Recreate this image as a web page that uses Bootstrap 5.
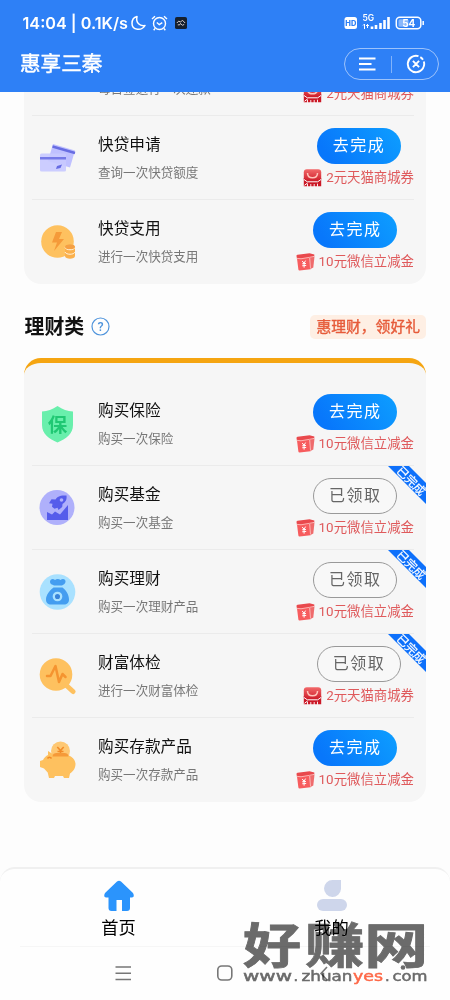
<!DOCTYPE html>
<html lang="zh-CN">
<head>
<meta charset="utf-8">
<meta name="viewport" content="width=device-width, initial-scale=1">
<title>惠享三秦</title>
<link href="https://cdn.jsdelivr.net/npm/bootstrap@5.3.0/dist/css/bootstrap.min.css" rel="stylesheet">
<style>
body{font-family:Roboto,"Noto Sans CJK SC",sans-serif;color:#111;background:#fdfdfd;height:1000px;overflow:hidden}
svg{display:block;flex:none}
.app-head{background:#2e80f6;height:92px;flex:none}
.status-line{height:46px;padding:0 24px 0 22.5px;font:600 16.2px/46px Inter,sans-serif}
.title-line{height:36px;padding:0 11.5px 0 20px;font-size:20.6px;line-height:36px}
.title-line>span{-webkit-text-stroke:.45px #fff}
.capsule{width:95px;height:32px;border:1px solid #9dc3fb;border-radius:16px}
.capsule i{width:1px;height:17px;background:#82b3fa}
.task-card{background:#f6f6f6;margin:0 24px;border-radius:0 0 17px 17px;overflow:hidden}
.card-a{height:192px}
.card-b{height:444px;border-radius:17px;border-top:5px solid #f5a511;padding-top:19px}
.task{height:84px;flex:none;position:relative;padding:0 12px 0 15px}
.task+.task::before{content:"";position:absolute;left:8px;right:12px;top:-1px;height:1px;background:#ebebeb}
.task-name{font-size:15.65px;line-height:24px;margin-top:17px}
.task-sub{font-size:12.55px;line-height:20px;margin-top:6px;color:#777}
.task-text{margin-left:22px}
.btn.act{width:84px;height:36px;margin-top:12px;padding:0 0 0 1px;border-radius:18px;font-size:16px;line-height:34px;letter-spacing:1.6px}
.btn.todo{color:#fff;border:0;background:linear-gradient(55deg,#0877fb 15%,#0d9cff 95%)}
.btn.got{color:#666;border:1px solid #999;background:#f8f8f8}
.reward{color:#df5a5c;font-size:13.4px;line-height:20px;margin-top:4px;gap:4px}
.corner-flag{position:absolute;right:0;top:0;width:38px;height:38px}
.section-head{height:74px;padding:11px 24px 0 24.5px}
.section-head h2{font-size:19.9px;font-weight:700;line-height:28px;padding-top:3px}
.promo{background:#feefe4;color:#e65b3a;-webkit-text-stroke:.4px #e65b3a;font-size:14.8px;line-height:24px;height:24px;padding:0 6px;border-radius:5px}
.tabs{position:absolute;left:0;right:0;top:867px;height:133px;border-top:2px solid #f0f0f0;border-radius:15px 15px 0 0;background:#fefefe}
.tabs a{color:#000;font-size:17.3px;line-height:24px;padding-top:11px}
.tabs a span{margin-top:4px}
.tab-row{height:77px;padding:0 12px}
.sys-row{height:52px;margin:0 20px;border-top:1px solid #f6f6f6}
.site-mark{position:absolute;left:240px;top:914px;mix-blend-mode:multiply}
</style>
</head>
<body class="position-relative d-flex flex-column">
<svg width="0" height="0" class="position-absolute">
<defs>
<linearGradient id="redbag" x2="0" y2="1"><stop stop-color="#f2696a"/><stop offset="1" stop-color="#cb1826"/></linearGradient>
<symbol id="tmall" viewBox="0 0 18 18"><rect x=".3" y=".3" width="17.400" height="12.500" rx="3" fill="url(#redbag)"/><path d="M.3 9l3.500 3h10.400l3.500-3v8.200H.3z" fill="#cb1826"/><path d="M4 4c0 3 2 4.800 5 4.800s5-1.800 5-4.800" fill="none" stroke="#ffc4ba" stroke-width="1.500"/><path d="M.5 10.500l3.300 2.300h10.400l3.300-2.300M1 16.300l3-2.300" fill="none" stroke="#fff" stroke-width="1"/><path d="M4 14.700v3M7.300 15v3M10.700 15v3M14 14.700v3" stroke="#fff" stroke-width=".9"/></symbol>
<symbol id="coupon" viewBox="0 0 19 18"><path d="M13 4.500l5.500-1-1.200 11-3.300 1.700z" fill="#ef6b6c"/><path d="M.5 3Q.4 2 1.500 1.800l12-1.500 4.800 1.200v2L13 5 1 6z" fill="#e9494d"/><path d="M1 5.500l12.500-1.300 1 12L3.700 17.500Q2.600 17.600 2.400 16.500z" fill="#f75c5e"/><path d="M.5 5.300l4.500.5 8.500-1.500 5-1M13.700 5l.8 10.500" fill="none" stroke="#ffd8d5" stroke-width=".7"/><path d="M6.200 8l1.800 2.200 1.600-2.600M6.200 10.800l3.800-.4M6.200 12.800l4-.4M8.100 10v4.600" fill="none" stroke="#fff" stroke-width="1"/></symbol>
<symbol id="flag" viewBox="0 0 38 38"><path d="M0 0h21l17 17v21z" fill="#0d70fb"/><text transform="translate(23.300 14.800) rotate(45)" text-anchor="middle" y="4.400" font-size="11.800" fill="#fff" stroke="#fff" stroke-width=".2">已完成</text></symbol>
</defs>
</svg>

<header class="app-head text-white">
<div class="status-line d-flex align-items-center">
<span>14:04 | 0.1K/s</span>
<svg style="margin-left:3px" width="15" height="16" viewBox="0 0 15 16" fill="none" stroke="#fff" stroke-width="1.500"><path d="M6 1.500C4.500 8 9 11.500 14 10.500C11 16 1 15.500 1 8.500C1 5 3 2.200 6 1.500z" stroke-linejoin="round"/></svg>
<svg style="margin-left:5px" width="17" height="16" viewBox="0 0 17 16" fill="none" stroke="#fff" stroke-width="1.400"><circle cx="8.500" cy="8.500" r="6"/><path d="M1 4l3-2.800M16 4l-3-2.800M5.800 7.500l2.500 2.200 3-2M4 13.500l-1.300 1.700M13 13.500l1.300 1.700"/></svg>
<svg style="margin-left:7px" width="12" height="12" viewBox="0 0 13 13"><rect width="13" height="13" rx="2" fill="#15202f"/><path d="M2 6.500l2-2 2 1 2-2 3 3M3 8.500h2l1-1.500 2 2 2-1" fill="none" stroke="#e8d9d4" stroke-width="1"/></svg>
<svg class="ms-auto" width="82" height="20" viewBox="0 0 82 20">
<rect x=".5" y="4" width="12.500" height="12" rx="2.500" fill="#fff"/><text x="6.800" y="12.700" font-size="7.500" font-weight="800" text-anchor="middle" fill="#2e80f6">HD</text>
<text x="18.500" y="8" font-size="8.500" font-weight="600" fill="#fff">5G</text>
<path d="M20.500 16v-5M19 12.500l1.500-1.500M23.500 11v4M22 12.500h3" stroke="#fff" stroke-width="1"/>
<path d="M28 16v-2.500M32 16v-4M36.500 16v-6M40.500 16v-9M44.500 16V4" stroke="#fff" stroke-width="2.600"/>
<rect x="52.300" y="4.300" width="24.500" height="11.400" rx="3.500" fill="none" stroke="#fff" stroke-width="1.500"/><rect x="54.500" y="6.200" width="10" height="7.600" rx="1.500" fill="#8ab8fb"/><path d="M79.200 8v4" stroke="#fff" stroke-width="1.500"/>
<text x="64.800" y="13.500" font-size="10" font-weight="700" text-anchor="middle" fill="#fff">54</text></svg>
</div>
<div class="title-line d-flex align-items-center justify-content-between">
<span>惠享三秦</span>
<div class="capsule d-flex align-items-center">
<svg style="margin-left:14.500px" width="17" height="16" viewBox="0 0 17 16" stroke="#fff" stroke-width="2"><path d="M0 2.500h16.500M0 8h12.500M0 13.500h16.500"/></svg>
<i style="margin:0 14px 0 15px"></i>
<svg width="20" height="20" viewBox="0 0 20 20" fill="none" stroke="#fff" stroke-width="1.900"><path d="M12.500 2.200A8.200 8.200 0 1 0 17.800 7.500M14.300 3.100A8.200 8.200 0 0 1 17 5.800M6.900 6.900l6.200 6.200M13.100 6.900l-6.200 6.200"/></svg>
</div>
</div>
</header>

<section class="task-card card-a d-flex flex-column justify-content-end flex-shrink-0">
<div class="task d-flex"><div class="task-text" style="margin-left:59px"><div class="task-name">快贷还款</div><div class="task-sub">每日签进行一次还款</div></div>
<div class="ms-auto d-flex flex-column align-items-center"><button class="btn act todo">去完成</button><div class="reward d-flex align-items-center"><svg width="19" height="18"><use href="#tmall"/></svg>2元天猫商城券</div></div></div>
<div class="task d-flex">
<svg class="align-self-center" width="37" height="40" viewBox="0 0 37 40"><path d="M14 6l22 6.500-5 17L9 23z" fill="#bfc0ff"/><path d="M13.500 8.500L36 15" stroke="#686de2" stroke-width="2.400"/><rect x="1" y="15.500" width="26" height="18" rx="1.500" fill="#c8c9ff" fill-opacity=".92"/><path d="M1 20.300h26" stroke="#7579e8" stroke-width="2.500"/><path d="M18 28l5-1.500-1.500 3.500-4.500 1z" fill="#666be3"/></svg>
<div class="task-text"><div class="task-name">快贷申请</div><div class="task-sub">查询一次快贷额度</div></div>
<div class="ms-auto d-flex flex-column align-items-center"><button class="btn act todo">去完成</button><div class="reward d-flex align-items-center"><svg width="19" height="18"><use href="#tmall"/></svg>2元天猫商城券</div></div></div>
<div class="task d-flex">
<svg class="align-self-center" width="37" height="40" viewBox="0 0 37 40"><circle cx="18.500" cy="19.500" r="16.300" fill="#fec15f"/><path d="M17 10h6l-3 7h5L15 29l3-8.500h-5z" fill="#f59a39"/><path d="M26 25c0-3.500 10-3.500 10 0v9c0 3.500-10 3.500-10 0z" fill="#fbb14d"/><path d="M26 25.500c1 3 9 3 10 0M26 30c1 3 9 3 10 0" fill="none" stroke="#fff0d8" stroke-width="1"/><ellipse cx="31" cy="24.700" rx="4.800" ry="2.300" fill="#f5a044"/></svg>
<div class="task-text"><div class="task-name">快贷支用</div><div class="task-sub">进行一次快贷支用</div></div>
<div class="ms-auto d-flex flex-column align-items-center"><button class="btn act todo">去完成</button><div class="reward d-flex align-items-center"><svg width="19" height="18"><use href="#coupon"/></svg>10元微信立减金</div></div></div>
</section>

<div class="section-head d-flex align-items-center flex-shrink-0">
<h2 class="mb-0">理财类</h2>
<svg style="margin-left:7px" width="19" height="19" viewBox="0 0 19 19"><circle cx="9.500" cy="9.500" r="8.500" fill="none" stroke="#4f94dc" stroke-width="1.200"/><text x="9.500" y="14" font-size="12.500" font-weight="500" text-anchor="middle" fill="#4f94dc">?</text></svg>
<span class="promo ms-auto">惠理财，领好礼</span>
</div>

<section class="task-card card-b flex-shrink-0">
<div class="task d-flex">
<svg class="align-self-center" width="37" height="40" viewBox="0 0 37 40"><path d="M18.500 2c5 3.500 10 5 15.500 5.500V21c0 9-7 14-15.500 17.500C10 35 3 30 3 21V7.500C8.500 7 13.500 5.500 18.500 2z" fill="#69efac"/><text x="18.500" y="27.500" font-size="19.500" font-weight="700" text-anchor="middle" fill="#20c873">保</text></svg>
<div class="task-text"><div class="task-name">购买保险</div><div class="task-sub">购买一次保险</div></div>
<div class="ms-auto d-flex flex-column align-items-center"><button class="btn act todo">去完成</button><div class="reward d-flex align-items-center"><svg width="19" height="18"><use href="#coupon"/></svg>10元微信立减金</div></div></div>
<div class="task d-flex">
<svg class="align-self-center" width="37" height="40" viewBox="0 0 37 40"><circle cx="18" cy="19.500" r="17.500" fill="#afb0fb"/><path d="M8 24l5 2.500 3-3 5 3 8-9.500v15H8z" fill="#555ceb"/><path d="M27.500 7.500c-7-.5-9.500 1.500-11 4l-4-.3-2.500 4 3.500.5-.5 3 2.500 2 3-1 1 2.300 3.700-3 .3-3c3-2 4.500-4 4-8.500z" fill="#555ceb"/><circle cx="22.500" cy="12" r="1.800" fill="#afb0fb"/></svg>
<div class="task-text"><div class="task-name">购买基金</div><div class="task-sub">购买一次基金</div></div>
<div class="ms-auto d-flex flex-column align-items-center"><button class="btn act got">已领取</button><div class="reward d-flex align-items-center"><svg width="19" height="18"><use href="#coupon"/></svg>10元微信立减金</div></div>
<svg class="corner-flag"><use href="#flag"/></svg></div>
<div class="task d-flex">
<svg class="align-self-center" width="37" height="40" viewBox="0 0 37 40"><circle cx="18.500" cy="20" r="17.800" fill="#a9e1ff"/><path d="M11 10c0-3 3-4 5-2 1.500-1.500 4-1.500 5.500 0 2-2 5.500-1 5 2-.5 2-2 2.500-3.500 3.500h-8C13 12.500 11 12 11 10zM14.500 15.500h9c4 3 6.500 7.500 6.500 12 0 3.500-2 5-5 5H12c-3 0-5-1.500-5-5 0-4.500 3.500-9 7.500-12z" fill="#449df0"/><circle cx="18.500" cy="24.500" r="3.700" fill="#3983d9" stroke="#a9e1ff" stroke-width="2.300"/></svg>
<div class="task-text"><div class="task-name">购买理财</div><div class="task-sub">购买一次理财产品</div></div>
<div class="ms-auto d-flex flex-column align-items-center"><button class="btn act got">已领取</button><div class="reward d-flex align-items-center"><svg width="19" height="18"><use href="#coupon"/></svg>10元微信立减金</div></div>
<svg class="corner-flag"><use href="#flag"/></svg></div>
<div class="task d-flex">
<svg class="align-self-center" width="37" height="40" viewBox="0 0 37 40"><path d="M28 30l6 5.500" stroke="#fec15f" stroke-width="5" stroke-linecap="round"/><circle cx="17" cy="18.500" r="16.300" fill="#fec15f"/><path d="M8 20h3.500l5-10 3.500 16 3.500-8 3 3" fill="none" stroke="#f59430" stroke-width="2.500" stroke-linecap="round" stroke-linejoin="round"/></svg>
<div class="task-text"><div class="task-name">财富体检</div><div class="task-sub">进行一次财富体检</div></div>
<div class="ms-auto d-flex flex-column align-items-center"><button class="btn act got">已领取</button><div class="reward d-flex align-items-center"><svg width="19" height="18"><use href="#tmall"/></svg>2元天猫商城券</div></div>
<svg class="corner-flag"><use href="#flag"/></svg></div>
<div class="task d-flex">
<svg class="align-self-center" width="37" height="40" viewBox="0 0 37 40"><circle cx="21.500" cy="11" r="9.500" fill="#fec873"/><path d="M18.300 7l3.200 3.500L24.700 7M18.500 11.500h6M21.500 10.500v5" stroke="#f28a27" stroke-width="1.600" fill="none"/><path d="M9 11l5.500 3.500C27 11.500 36.500 17 36.500 24c0 4.500-2.500 7.500-5.500 9.500l-1 4.500h-5l-1-2h-8l-1 2h-5l-1.300-5.500L5 28.500l-4-1.500v-6l3-1c1.300-2.500 3-4 5-5z" fill="#fec15f"/><path d="M13.500 16.500c0-2.500 2-3.500 4-3.500h8c2 0 4 1 4 3.500z" fill="#f59a39"/><path d="M8.500 18.500c1-1.700 3-1.700 4 0" stroke="#f28a27" stroke-width="1.500" fill="none"/></svg>
<div class="task-text"><div class="task-name">购买存款产品</div><div class="task-sub">购买一次存款产品</div></div>
<div class="ms-auto d-flex flex-column align-items-center"><button class="btn act todo">去完成</button><div class="reward d-flex align-items-center"><svg width="19" height="18"><use href="#coupon"/></svg>10元微信立减金</div></div></div>
</section>

<nav class="tabs">
<div class="tab-row d-flex">
<a class="w-50 text-decoration-none d-flex flex-column align-items-center" href="#"><svg width="32" height="32" viewBox="0 0 32 32"><path d="M14 1.500Q16 0 18 1.500L30 13Q32 17 29 17.500H27V28Q27 31 24 31H19V20H13.500V31H8.500Q5.500 31 5.500 28V17.500H3Q0 17 2 13z" fill="#2b94fc"/></svg><span>首页</span></a>
<a class="w-50 text-decoration-none d-flex flex-column align-items-center" href="#"><svg width="32" height="32" viewBox="0 0 32 32"><path d="M16.500 0H25v9A8.500 8.500 0 1 1 16.500 0z" fill="#ced6eb"/><rect x="1" y="19" width="30" height="12" rx="6" fill="#ced6eb"/></svg><span>我的</span></a>
</div>
<div class="sys-row">
<svg width="410" height="50" viewBox="0 0 410 50" fill="none" stroke="#777" stroke-width="1.600"><path d="M95.500 20h15.500M95.500 26.300h15.500M95.500 32.500h15.500"/><rect x="197.800" y="19" width="14" height="14" rx="4"/><path d="M307 20l-6 6.500 6 6.500"/></svg>
</div>
</nav>

<svg class="site-mark" width="195" height="72" viewBox="0 0 195 72" fill="#6b6b6b">
<g font-size="48" font-weight="700" font-family="Noto Sans CJK SC" stroke="#6b6b6b" stroke-width=".8"><text transform="translate(3 49) scale(1.210 1)">好</text><text transform="translate(65 49) scale(1.240 1)">赚</text><text transform="translate(124 49) scale(1.340 1)">网</text></g>
<g font-size="14.500" font-family="DejaVu Sans" stroke="#6b6b6b" stroke-width=".5"><text x="3" y="67" textLength="49" lengthAdjust="spacingAndGlyphs">www</text><text x="53.500" y="67">.</text><text x="61.500" y="67" textLength="51" lengthAdjust="spacingAndGlyphs">zhuan</text><text x="113" y="67" textLength="30" lengthAdjust="spacingAndGlyphs" fill="#ff6847" stroke="#ff6847">yes</text><text x="145" y="67">.</text><text x="152.500" y="67" textLength="35" lengthAdjust="spacingAndGlyphs">com</text></g>
<circle cx="163" cy="53.500" r="2.300"/></svg>
<script src="https://cdn.jsdelivr.net/npm/bootstrap@5.3.0/dist/js/bootstrap.bundle.min.js"></script>
</body>
</html>
